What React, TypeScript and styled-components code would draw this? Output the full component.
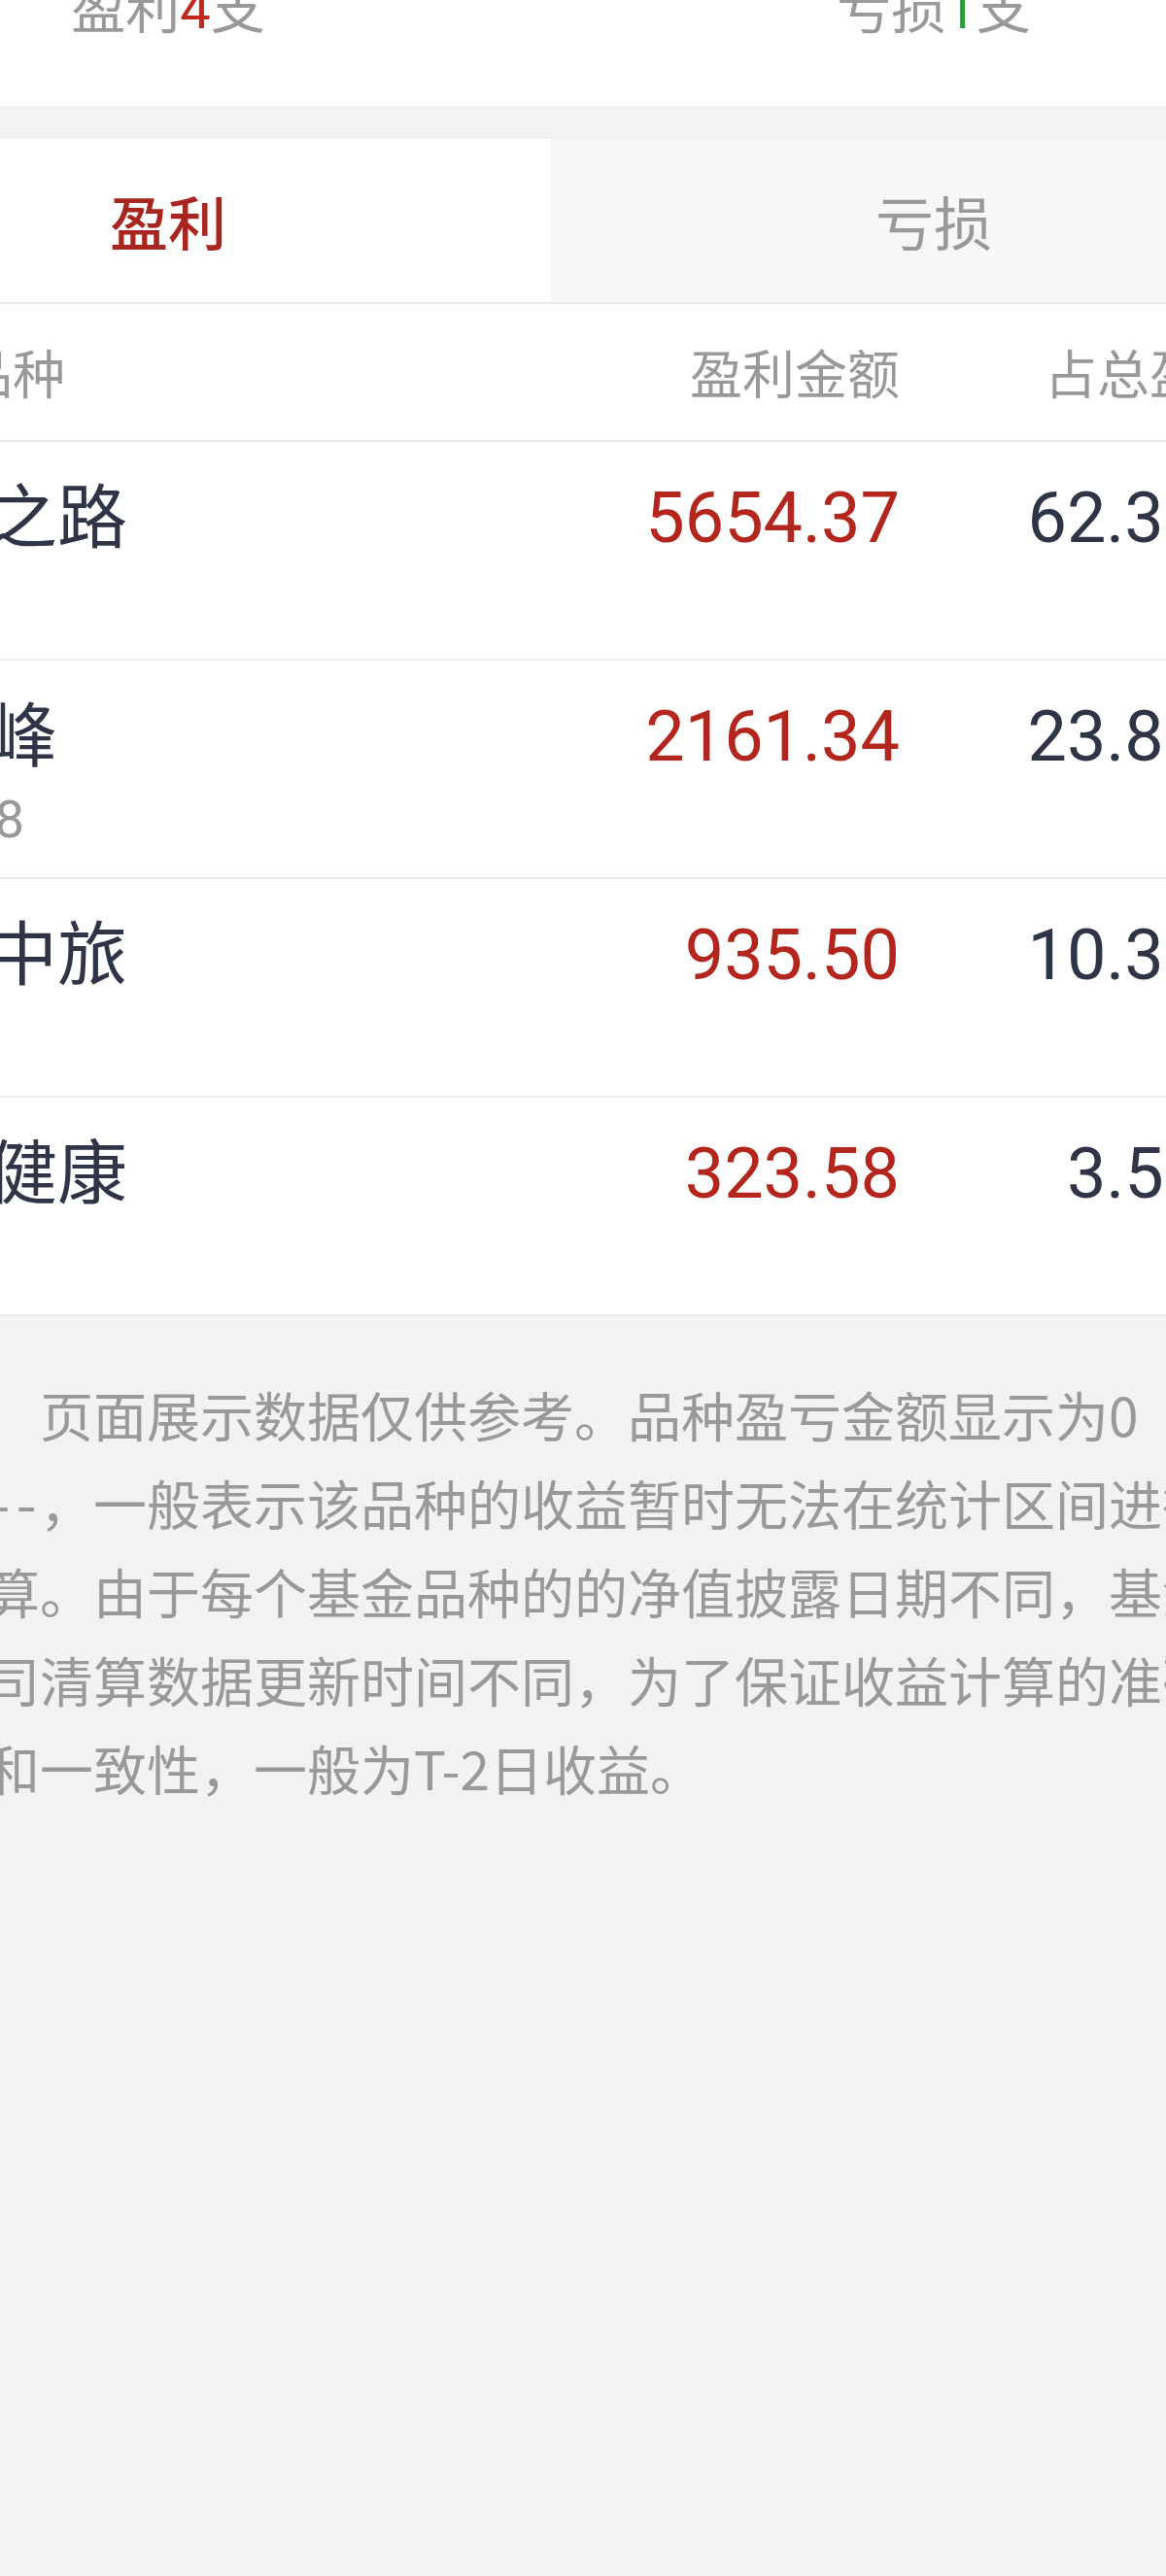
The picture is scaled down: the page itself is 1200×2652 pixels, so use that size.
import styled, { createGlobalStyle } from 'styled-components'

const GlobalStyle = createGlobalStyle`
  html, body {
    margin: 0;
    padding: 0;
    background: #f2f2f2;
    overflow-x: hidden;
  }
`

type Fund = {
  name: string
  code?: string
  amount: string
  ratio: string
}

const funds: Fund[] = [
  { name: '丝绸之路', amount: '5654.37', ratio: '62.31%' },
  { name: '新高峰', code: '161128', amount: '2161.34', ratio: '23.82%' },
  { name: '华夏中旅', amount: '935.50', ratio: '10.31%' },
  { name: '医疗健康', amount: '323.58', ratio: '3.57%' },
]

export default function App() {
  return (
    <Viewport>
      <GlobalStyle />
      <Page>
        <Summary>
          <SummaryItem>
            盈利<Count $tone="up">4</Count>支
          </SummaryItem>
          <SummaryItem>
            亏损<Count $tone="down">1</Count>支
          </SummaryItem>
        </Summary>

        <TabBar>
          <Tab $active>盈利</Tab>
          <Tab>亏损</Tab>
        </TabBar>

        <Table>
          <HeaderRow>
            <HeadCell>基金品种</HeadCell>
            <HeadCell $right>盈利金额</HeadCell>
            <HeadCell $right>占总盈利</HeadCell>
          </HeaderRow>
          {funds.map((f) => (
            <Row key={f.name}>
              <NameCell>
                <Name>{f.name}</Name>
                {f.code && <Code>{f.code}</Code>}
              </NameCell>
              <Amount>{f.amount}</Amount>
              <Ratio>{f.ratio}</Ratio>
            </Row>
          ))}
        </Table>

        <Notice>
          页面展示数据仅供参考。品种盈亏金额显示为0
          <Keep>
            或<Dash>--</Dash>，
          </Keep>
          一般表示该品种的收益暂时无法在统计区间进行计算。由于每个基金品种的的净值披露日期不同，基金公司清算数据更新时间不同，为了保证收益计算的准确性和一致性，一般为T-2日收益。
        </Notice>
      </Page>
    </Viewport>
  )
}

const Viewport = styled.div`
  width: 100%;
  min-height: 2652px;
  overflow: hidden;
  background: #f2f2f2;
`

const Page = styled.div`
  width: 1576px;
  margin: -23px 0 0 -221px;
  font-family: 'Noto Sans CJK SC', 'Noto Sans', sans-serif;
  text-spacing-trim: space-all;
`

const Summary = styled.div`
  display: grid;
  grid-template-columns: 1fr 1fr;
  height: 132px;
  background: #fff;
`

const SummaryItem = styled.div`
  text-align: center;
  font-size: 56px;
  line-height: 1;
  color: #999;
`

const Count = styled.span<{ $tone: 'up' | 'down' }>`
  font-family: Roboto, sans-serif;
  color: ${({ $tone }) => ($tone === 'up' ? '#c0281e' : '#2e9a3c')};
`

const TabBar = styled.div`
  display: grid;
  grid-template-columns: 1fr 1fr;
  margin-top: 34px;
  border-bottom: 2px solid #e8e8e8;
`

const Tab = styled.div<{ $active?: boolean }>`
  display: flex;
  align-items: center;
  justify-content: center;
  height: 168px;
  font-size: 60px;
  line-height: 1;
  font-weight: ${({ $active }) => ($active ? 500 : 400)};
  color: ${({ $active }) => ($active ? '#a8261f' : '#999')};
  background: ${({ $active }) => ($active ? '#fff' : '#f7f7f7')};
`

const Table = styled.div`
  background: #fff;
`

const HeaderRow = styled.div`
  display: grid;
  grid-template-columns: 1fr 420px 365px;
  align-items: center;
  height: 142px;
  box-sizing: border-box;
  padding: 0 64px 0 72px;
  border-bottom: 2px solid #ececec;
`

const HeadCell = styled.div<{ $right?: boolean }>`
  font-size: 54px;
  line-height: 1;
  color: #999;
  text-align: ${({ $right }) => ($right ? 'right' : 'left')};
  white-space: nowrap;
`

const Row = styled.div`
  display: grid;
  grid-template-columns: 1fr 420px 365px;
  align-items: baseline;
  height: 225px;
  box-sizing: border-box;
  padding: 30px 64px 0;
  border-bottom: 2px solid #ececec;
`

const NameCell = styled.div`
  display: flex;
  flex-direction: column;
`

const Name = styled.div`
  font-size: 72px;
  line-height: 84px;
  color: #2f3447;
  white-space: nowrap;
`

const Code = styled.div`
  margin-top: 20px;
  font-family: Roboto, sans-serif;
  font-size: 54px;
  line-height: 60px;
  color: #999;
`

const Amount = styled.div`
  font-family: Roboto, sans-serif;
  font-size: 72px;
  line-height: 84px;
  color: #b3261e;
  text-align: right;
`

const Ratio = styled(Amount)`
  color: #2f3447;
`

const Notice = styled.p`
  margin: 0;
  padding: 55px 84px 0 152px;
  font-size: 55px;
  line-height: 91px;
  color: #999;
  text-indent: 2em;
`

const Keep = styled.span`
  white-space: nowrap;
`

const Dash = styled.span`
  font-feature-settings: 'hwid';
`
